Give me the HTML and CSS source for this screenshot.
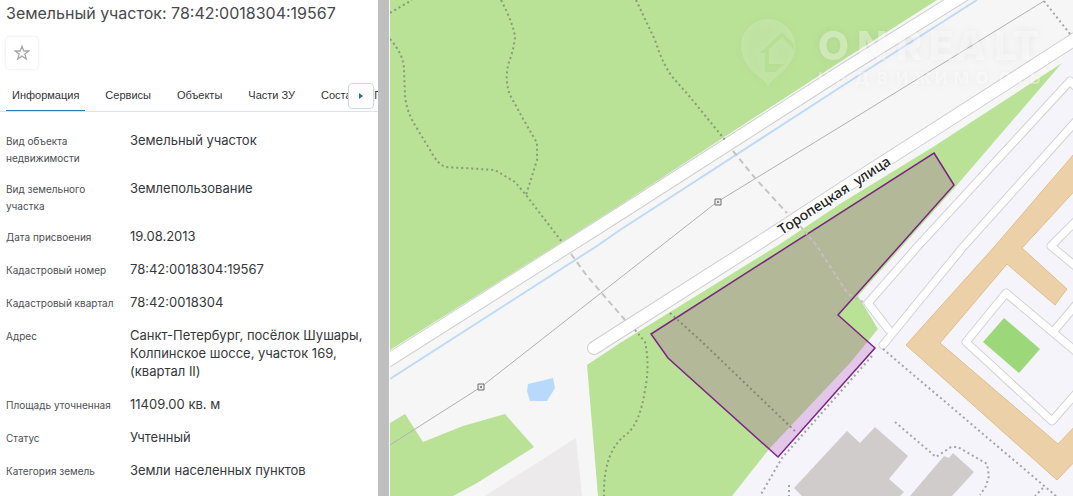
FILE: index.html
```html
<!DOCTYPE html>
<html lang="ru">
<head>
<meta charset="utf-8">
<title>Земельный участок</title>
<link rel="stylesheet" href="styles.css">
</head>
<body>
<div class="app">
  <main class="panel">
    <h1 class="title">Земельный участок: 78:42:0018304:19567</h1>
    <button class="favorite" type="button" aria-label="В избранное">
      <svg width="16" height="16" viewBox="0 0 16 16"><path d="M8 1.2 9.8 6h5L10.800 9l1.500 5L8 11.100 3.700 14l1.500-5L1.200 6h5z" fill="none" stroke="#a9a9ab" stroke-width="1.300"/></svg>
    </button>
    <div class="tabbar">
      <nav class="tabs">
        <a class="tab tab--active" href="#info">Информация</a>
        <a class="tab" href="#services">Сервисы</a>
        <a class="tab" href="#objects">Объекты</a>
        <a class="tab" href="#parts">Части ЗУ</a>
        <a class="tab" href="#members">Состав ЕЗП</a>
      </nav>
      <button class="next" type="button" aria-label="Следующие вкладки">
        <svg width="6" height="8" viewBox="0 0 6 8"><path d="M1 1l4 3-4 3z" fill="#1f6f9f"/></svg>
      </button>
    </div>
    <dl class="facts" id="info">
      <div class="row"><dt>Вид объекта недвижимости</dt><dd>Земельный участок</dd></div>
      <div class="row"><dt>Вид земельного участка</dt><dd>Землепользование</dd></div>
      <div class="row"><dt>Дата присвоения</dt><dd>19.08.2013</dd></div>
      <div class="row"><dt>Кадастровый номер</dt><dd>78:42:0018304:19567</dd></div>
      <div class="row"><dt>Кадастровый квартал</dt><dd>78:42:0018304</dd></div>
      <div class="row row--long"><dt>Адрес</dt><dd>Санкт-Петербург, посёлок Шушары, Колпинское шоссе, участок 169, (квартал II)</dd></div>
      <div class="row"><dt>Площадь уточненная</dt><dd>11409.00 кв. м</dd></div>
      <div class="row"><dt>Статус</dt><dd>Учтенный</dd></div>
      <div class="row"><dt>Категория земель</dt><dd>Земли населенных пунктов</dd></div>
    </dl>
  </main>
  <div class="divider"></div>
  <section class="map" aria-label="Карта">
    <svg class="map-canvas" viewBox="390 0 683 496" preserveAspectRatio="xMinYMin slice">
      <rect class="ground" x="390" width="683" height="496"/>
      <path class="residential" d="M1073 50 1061 63 955 185 858 296 770 448 732 496H1073z"/>
      <path class="park" d="M390 0H937L843 60 620 205 562 242 390 350z"/>
      <path class="park" d="M390 423 405 414 423 442 463 426 505 414 534 447 477 483 453 496H390z"/>
      <path class="yard" d="M485 496 576 438 582 496z"/>
      <path class="park" d="M587 365 620 343 777 246 843 202 933 147 1062 63 957 185 858 296 878 329 850 363 770 448 732 496H598z"/>
      <path class="water" d="M528 384 553 378 555 388 547 401H530L527 391z"/>
      <path class="stream" d="M390 379 597 246 620 230 850 81 977 0"/>
      <path class="power" d="M390 445 481 387 717 202 843 125 1044 1"/>
      <path class="pylon" d="M478 384h6v6h-6zM715 199h6v6h-6z"/>
      <path class="pylon-core" d="M480 386h2v2h-2zM717 201h2v2h-2z"/>

      <path class="casing casing--wide" d="M380 365.500 620 213.500 843 70.500 975-12"/>
      <path class="road road--wide" d="M380 365.500 620 213.500 843 70.500 975-12"/>
      <path class="casing casing--wide" d="M594 348 754 246 843 188 1080 36"/>
      <path class="road road--wide" d="M594 348 754 246 843 188 1080 36"/>

      <g class="casing casing--thin">
        <path d="M1078 89 1070 81 918 246 868 303 888 329"/><path d="M1078 119 963 247 883 345"/>
        <path d="M1080 355 1006 293 966 342 1052 421 1080 389"/><path d="M1054 331 1080 300"/><path d="M1080 270 1051 246 1080 217"/>
      </g>
      <g class="road road--thin">
        <path d="M1078 89 1070 81 918 246 868 303 888 329"/><path d="M1078 119 963 247 883 345"/>
        <path d="M1080 355 1006 293 966 342 1052 421 1080 389"/><path d="M1054 331 1080 300"/><path d="M1080 270 1051 246 1080 217"/>
      </g>

      <path class="housing" d="M1080 147 995 246 906 345 1057 480 1080 456V421L1058 444 940 343 1007 264 1055 305 1067 289 1022 248 1080 185z"/>
      <path class="pitch" d="M1004 318 1040 349 1019 373 983 342z"/>
      <path class="building" d="M802 496 794 488 847 431 860 443 875 427 908 456 889 479 904 492 900 496z"/>
      <path class="building" d="M910 496 944 456 949 458 953 453 974 472 952 496z"/>

      <g class="trail">
        <path d="M390 13 412 0"/>
        <path d="M390 39Q404 55 404 70L405 95Q406 112 418 130L430 150Q438 165 446 167L495 170 515 182 526 195 562 242"/>
        <path d="M501 0Q514 25 515 38Q513 52 509 62Q504 80 510 95L522 117 537 143V160L526 195"/>
        <path d="M636 0 655 40Q664 68 675 80L690 97 725 140"/>
        <path d="M635 330 645 342Q650 365 645 390Q640 422 628 433Q603 450 604 496"/>
        <path d="M1044 1 1070 34"/>
        <path d="M883 349 1056 496M872 356 782 458 760 496M789 485V496M1043 488 1035 496"/>
        <path d="M895 422 936 457 951 447H958L987 464 989 476 986 486 980 495"/>
      </g>
      <path class="crossing" d="M571 254 587 276 625 320M733 151 755 178 787 213"/>

      <path class="parcel" d="M934 153 954 185 838 315 875 348 778 457 668 358 651 334z"/>
      <path class="parcel-trail" d="M800 226 817 246 848 294 863 302"/>
      <path class="trail" d="M670 313 700 340 797 433"/>
      <g class="street" transform="translate(782 235) rotate(-33)"><text>Торопецкая</text><text x="90">улица</text></g>

      <g class="watermark">
        <path fill-rule="evenodd" d="M768 86C762 76 741 68 741 46A27 27 0 0 1 795 46C795 68 774 76 768 86zM782 32 760 53H765V72H776L784 64H769V49L782 37 794 50V44z"/>
        <text class="watermark-name" y="60" x="818 857 896 929 955 994 1012">ONREALT</text>
        <text class="watermark-sub" y="84" x="818 836 855 877 896 914 935 954 976 999 1015 1030">НЕДВИЖИМОСТЬ</text>
      </g>
    </svg>
  </section>
</div>
</body>
</html>
```

FILE: styles.css
```css
* { box-sizing: border-box; }
body { margin: 0; background: #fff; font-family: Inter, "Noto Sans", sans-serif; color: #34373c; }
.app { display: flex; min-height: 100vh; }
.panel { flex: 0 0 378px; min-width: 0; padding: 2px 0 0 6px; }
.title { margin: 0; font-size: 16px; line-height: 22px; font-weight: 400; color: #48494d; white-space: nowrap; }
.favorite { display: flex; align-items: center; justify-content: center; width: 32px; height: 32px; margin: 13px 0 0; padding: 0; border: 0; border-radius: 4px; background: #fff; box-shadow: 0 0 3px rgba(0, 0, 0, .12); }

.tabbar { display: grid; grid-template-columns: minmax(0, 1fr); align-items: center; margin: 11px 0 0 -6px; padding-left: 6px; border-bottom: 1px solid #dde2e8; }
.tabs { grid-area: 1 / 1; display: flex; gap: 14px; overflow: hidden; }
.tab { flex: none; padding: 7px 6px; font-family: "Liberation Sans", Arial, sans-serif; font-size: 11px; line-height: 16px; color: #303338; text-decoration: none; white-space: nowrap; border-bottom: 1px solid transparent; }
.tab--active { border-bottom-color: #2878a8; }
.next { grid-area: 1 / 1; justify-self: end; z-index: 1; display: flex; align-items: center; justify-content: center; width: 26px; height: 26px; margin-right: 4px; padding: 0; border: 1px solid #c5dae6; border-radius: 4px; background: #fff; }

.facts { display: grid; gap: 12px; margin: 19px 0 0; }
.row { display: grid; grid-template-columns: 112px minmax(0, 1fr); column-gap: 12px; min-height: 21px; padding-right: 12px; }
.row--long { padding-bottom: 3px; }
.row dt { padding-top: 2px; font-size: 10px; line-height: 17px; color: #4b4e54; }
.row dd { margin: 0; font-size: 13px; line-height: 18px; }

.divider { flex: 0 0 12px; background: #c0bfc0; border-right: 1px solid #fff; }
.map { flex: 1; min-width: 0; display: grid; overflow: hidden; }
.map-canvas { display: block; width: 100%; height: 100%; min-height: 0; }

.ground { fill: #f6f6f6; }
.residential { fill: #f5f4fb; }
.park { fill: #b9e297; }
.yard { fill: #eceaeb; }
.water { fill: #b8d9fb; }
.stream { fill: none; stroke: #bfdaf9; stroke-width: 2; }
.power { fill: none; stroke: #b0b0b0; stroke-width: 1; }
.pylon { fill: #ededed; stroke: #6f6f6f; stroke-width: 1; }
.pylon-core { fill: #8b8b8b; }
.casing { fill: none; stroke: #cfcfcf; stroke-linecap: round; stroke-linejoin: round; }
.road { fill: none; stroke: #fff; stroke-linecap: round; stroke-linejoin: round; }
.casing--wide { stroke-width: 14; }
.road--wide { stroke-width: 12; }
.casing--thin { stroke: #d2d1d6; stroke-width: 9; }
.road--thin { stroke-width: 7; }
.housing { fill: #ecd0a7; stroke: #dfbd8c; stroke-width: 1; }
.pitch { fill: #9cd77a; }
.building { fill: #cfcccb; }
.trail { fill: none; stroke: #55554f; stroke-opacity: .5; stroke-width: 2; stroke-dasharray: 2 3; }
.crossing { fill: none; stroke: #c4c4c4; stroke-width: 2; stroke-dasharray: 6 4; }
.parcel { fill: #9b14a5; fill-opacity: .2; stroke: #7d2383; stroke-width: 1.5; }
.parcel-trail { fill: none; stroke: #c9bdbf; stroke-width: 2; stroke-dasharray: 4 3; }
.street { font-family: "Noto Sans", sans-serif; font-size: 14px; font-weight: 500; fill: #222; stroke: #fff; stroke-width: 2; paint-order: stroke; }
.watermark { fill: #fff; fill-opacity: .15; filter: drop-shadow(0 0 4px rgba(0, 0, 0, .15)); }
.watermark-name { font-family: Inter, sans-serif; font-size: 40px; font-weight: 800; fill-opacity: .35; }
.watermark-sub { font-family: Inter, sans-serif; font-size: 16px; font-weight: 700; fill-opacity: .35; }
```
